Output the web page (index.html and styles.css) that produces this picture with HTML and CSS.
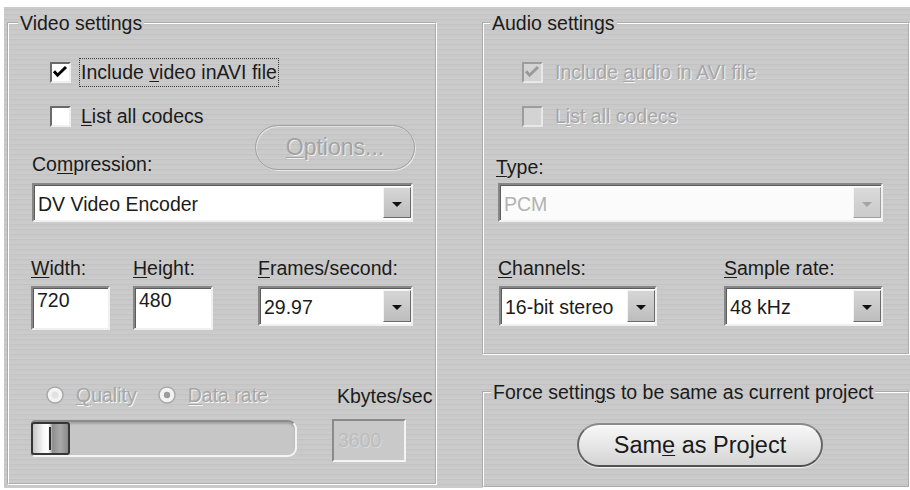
FILE: index.html
```html
<!DOCTYPE html>
<html>
<head>
<meta charset="utf-8">
<link rel="stylesheet" href="styles.css">
</head>
<body>
<div class="window">
  <div class="col-left">
    <fieldset class="group video">
      <legend>Video settings</legend>
      <div class="top-area">
        <div class="check-row row-1">
          <span class="checkbox"><svg width="17" height="17" viewBox="0 0 17 17"><path d="M2 7.2 L5.6 11.2 L14 3" fill="none" stroke="#000" stroke-width="3"/></svg></span>
          <span class="focus-label">Include <u>v</u>ideo inAVI file</span>
        </div>
        <div class="check-row row-2">
          <span class="checkbox"></span>
          <span class="plain-label"><u>L</u>ist all codecs</span>
        </div>
        <div class="field-label comp-label">Co<u>m</u>pression:</div>
        <button class="pill-opt" type="button"><u>O</u>ptions...</button>
      </div>
      <div class="combo comp-combo"><span class="combo-text">DV Video Encoder</span><span class="combo-btn"><span class="tri"></span></span></div>
      <div class="dims video-dims">
        <div class="dim dim-w">
          <div class="field-label"><u>W</u>idth:</div>
          <div class="edit edit-w">720</div>
        </div>
        <div class="dim dim-h">
          <div class="field-label"><u>H</u>eight:</div>
          <div class="edit edit-h">480</div>
        </div>
        <div class="dim dim-f">
          <div class="field-label"><u>F</u>rames/second:</div>
          <div class="combo fps-combo"><span class="combo-text">29.97</span><span class="combo-btn"><span class="tri"></span></span></div>
        </div>
      </div>
      <div class="rate-area">
        <div class="rate-left">
          <div class="radios">
            <span class="radio"><svg width="20" height="20" viewBox="0 0 20 20"><circle cx="10" cy="10" r="8" fill="#f3f3f3" stroke="#a8a8a8" stroke-width="1.5"/><circle cx="10" cy="10" r="3.5" fill="#e2e2e2"/></svg></span>
            <span class="dis-text radio-label q-label"><u>Q</u>uality</span>
            <span class="radio radio-2"><svg width="20" height="20" viewBox="0 0 20 20"><circle cx="10" cy="10" r="8" fill="#f3f3f3" stroke="#a8a8a8" stroke-width="1.5"/><circle cx="10" cy="10" r="3.2" fill="#9c9c9c"/></svg></span>
            <span class="dis-text radio-label"><u>D</u>ata rate</span>
          </div>
          <div class="slider"><div class="thumb"><span class="grip"></span></div></div>
        </div>
        <div class="rate-right">
          <div class="kb-label">Kbytes/sec</div>
          <div class="kb-box">3600</div>
        </div>
      </div>
    </fieldset>
  </div>
  <div class="col-right">
    <fieldset class="group audio">
      <legend>Audio settings</legend>
      <div class="check-row row-1 audio-row">
        <span class="checkbox dis-box"><svg width="17" height="17" viewBox="0 0 17 17"><path d="M2 7.2 L5.6 11.2 L14 3" fill="none" stroke="#9a9a9a" stroke-width="3"/></svg></span>
        <span class="plain-label dis-text">Include <u>a</u>udio in AVI file</span>
      </div>
      <div class="check-row row-2 audio-row">
        <span class="checkbox dis-box"></span>
        <span class="plain-label dis-text">L<u>i</u>st all codecs</span>
      </div>
      <div class="field-label type-label"><u>T</u>ype:</div>
      <div class="combo pcm-combo dis-combo"><span class="combo-text">PCM</span><span class="combo-btn"><span class="tri"></span></span></div>
      <div class="dims audio-dims">
        <div class="dim dim-c">
          <div class="field-label"><u>C</u>hannels:</div>
          <div class="combo chan-combo"><span class="combo-text">16-bit stereo</span><span class="combo-btn"><span class="tri"></span></span></div>
        </div>
        <div class="dim dim-s">
          <div class="field-label"><u>S</u>ample rate:</div>
          <div class="combo rate-combo"><span class="combo-text">48 kHz</span><span class="combo-btn"><span class="tri"></span></span></div>
        </div>
      </div>
    </fieldset>
    <fieldset class="group force">
      <legend>Force settin<u>g</u>s to be same as current project</legend>
      <button class="pill-main" type="button">Sam<u>e</u> as Project</button>
    </fieldset>
  </div>
</div>
</body>
</html>
```

FILE: styles.css
```css
* {
  box-sizing: border-box;
}

html,
body {
  margin: 0;
  padding: 0;
}

body {
  width: 910px;
  height: 490px;
  overflow: hidden;
  background: #ffffff;
  font-family: "Liberation Sans", Arial, sans-serif;
  font-size: 19.5px;
  color: #1b1b1b;
}

u {
  text-decoration: underline;
  text-decoration-thickness: 1px;
  text-underline-offset: 2px;
}

.window {
  margin: 7px 0 0 4px;
  width: 906px;
  height: 481px;
  display: flex;
  background-color: #c8c8c8;
  background-image: repeating-linear-gradient(180deg, #cbcbcb 0, #cbcbcb 2px, #c3c3c3 2px, #c3c3c3 3px, #c9c9c9 3px, #c9c9c9 5px);
}

.col-left {
  width: 437px;
  padding-left: 3px;
  flex: none;
}

.col-right {
  width: 434px;
  margin-left: 35px;
  padding-left: 6px;
  flex: none;
}

/* group boxes */
.group {
  margin: 0;
  padding: 0;
  min-width: 0;
  border: 2px groove #ffffff;
}

.group legend {
  padding: 0 2px;
  height: 22px;
  line-height: 22px;
  white-space: nowrap;
}

.video {
  margin-top: 5px;
  width: 430px;
  height: 473px;
}

.video legend {
  margin-left: 9px;
}

.audio {
  margin-top: 5px;
  width: 428px;
  height: 343px;
}

.audio legend {
  margin-left: 6px;
}

.force {
  margin-top: 26px;
  width: 428px;
  height: 107px;
}

.force legend {
  margin-left: 7px;
}

/* check rows */
.top-area {
  display: grid;
  grid-template-columns: 246px 160px;
}

.check-row {
  display: flex;
  align-items: center;
  height: 29px;
  margin-left: 41px;
}

.row-1 {
  margin-top: 24px;
  grid-column: 1 / -1;
}

.row-2 {
  margin-top: 15px;
  grid-column: 1;
}

.audio-row {
  margin-left: 38px;
}

.checkbox {
  flex: none;
  width: 21px;
  height: 21px;
  border: 2px solid;
  border-color: #6a6a6a #efefef #efefef #6a6a6a;
  background: #ffffff;
  display: flex;
}

.checkbox svg {
  display: block;
}

.dis-box {
  border-color: #9c9c9c #e8e8e8 #e8e8e8 #9c9c9c;
  background: #d3d3d3;
}

.focus-label,
.plain-label {
  margin-left: 8px;
  padding: 0 1px;
  line-height: 27px;
  white-space: nowrap;
}

.focus-label {
  border: 1px dotted #3a3a3a;
}

.plain-label {
  border: 1px solid transparent;
}

.audio-row .plain-label {
  margin-left: 10px;
}

.dis-text {
  color: #a6a6a6;
  text-shadow: 1px 1px 0 #f6f6f6;
}

.field-label {
  line-height: 22px;
  white-space: nowrap;
}

.comp-label {
  grid-column: 1;
  margin-top: 22px;
  margin-left: 23px;
}

.type-label {
  margin-top: 25px;
  margin-left: 12px;
}

/* pill buttons */
.pill-opt {
  grid-column: 2;
  grid-row: 2 / span 2;
  align-self: end;
  margin: 0 0 5px 0;
  width: 160px;
  height: 45px;
  padding: 0;
  border-radius: 23px;
  border: 1.5px solid #a0a0a0;
  background: transparent;
  box-shadow: inset 1px 1px 0 #e2e2e2, 1px 1px 0 #e6e6e6;
  font-family: "Liberation Sans", Arial, sans-serif;
  font-size: 23px;
  color: #a3a3a3;
  text-shadow: 1px 1px 0 #efefef;
}

.pill-main {
  display: block;
  margin: 20px 0 0 93px;
  width: 246px;
  height: 44px;
  padding: 0;
  border-radius: 22px;
  border: 2px solid;
  border-color: #8a8a8a #666666 #505050 #666666;
  background: linear-gradient(180deg, #f7f7f7 0%, #e9e9e9 45%, #d3d3d3 100%);
  box-shadow: inset 0 1px 0 #ffffff, 0 1px 1px rgba(255, 255, 255, 0.8);
  font-family: "Liberation Sans", Arial, sans-serif;
  font-size: 23.5px;
  color: #1a1a1a;
}

/* combos and edits */
.combo {
  display: flex;
  align-items: center;
  background: #ffffff;
  border: 2px solid;
  border-color: #868686 #f0f0f0 #f0f0f0 #868686;
  box-shadow: inset 1px 1px 0 #5c5c5c;
  padding: 2px 0;
}

.combo-text {
  flex: 1;
  padding-left: 4px;
  padding-top: 2px;
  line-height: 22px;
  white-space: nowrap;
}

.combo-btn {
  flex: none;
  width: 28px;
  align-self: stretch;
  border: 1px solid;
  border-color: #f4f4f4 #6a6a6a #6a6a6a #f4f4f4;
  background: linear-gradient(180deg, #d6d6d6, #bdbdbd);
  display: flex;
  align-items: center;
  justify-content: center;
}

.tri {
  width: 0;
  height: 0;
  margin-top: 3px;
  border-left: 5.5px solid transparent;
  border-right: 5.5px solid transparent;
  border-top: 5px solid #111111;
}

.dis-combo {
  background: #fbfbfb;
}

.dis-combo .combo-text {
  color: #b2b2b2;
}

.dis-combo .combo-btn {
  border-color: #f4f4f4 #a0a0a0 #a0a0a0 #f4f4f4;
  background: linear-gradient(180deg, #dadada, #cacaca);
}

.dis-combo .tri {
  border-top-color: #a4a4a4;
}

.comp-combo {
  margin-top: 8px;
  margin-left: 23px;
  width: 381px;
  height: 39px;
}

.pcm-combo {
  margin-top: 5px;
  margin-left: 14px;
  width: 385px;
  height: 39px;
}

.dims {
  display: flex;
  margin-top: 35px;
}

.video-dims {
  margin-left: 22px;
}

.audio-dims {
  margin-left: 14px;
}

.dim {
  flex: none;
}

.dim-w {
  width: 102px;
}

.dim-h {
  width: 125px;
}

.dim-f {
  width: 155px;
}

.dim-c {
  width: 226px;
}

.dim-s {
  width: 159px;
}

.edit {
  margin-top: 7px;
  height: 44px;
  background: #ffffff;
  border: 2px solid;
  border-color: #868686 #f0f0f0 #f0f0f0 #868686;
  box-shadow: inset 1px 1px 0 #5c5c5c;
  padding: 1px 0 0 4px;
  line-height: 22px;
}

.edit-w {
  width: 79px;
}

.edit-h {
  width: 80px;
}

.fps-combo {
  margin-top: 7px;
  width: 155px;
  height: 40px;
}

.chan-combo {
  margin-top: 7px;
  margin-left: 1px;
  width: 158px;
  height: 40px;
}

.rate-combo {
  margin-top: 7px;
  width: 159px;
  height: 40px;
}

/* rate area */
.rate-area {
  display: flex;
  margin-top: 53px;
  margin-left: 22px;
}

.rate-left {
  width: 266px;
  flex: none;
}

.radios {
  display: flex;
  align-items: center;
  height: 24px;
  padding-left: 14px;
}

.radio {
  display: flex;
  width: 20px;
  height: 20px;
}

.radio-2 {
  margin-left: 20px;
}

.radio-label {
  margin-left: 11px;
  line-height: 22px;
  white-space: nowrap;
}

.slider {
  margin-top: 13px;
  height: 37px;
  display: flex;
  border: 2px solid;
  border-color: #8c8c8c #f4f4f4 #f4f4f4 #8c8c8c;
  border-radius: 4px 9px 9px 4px;
  box-shadow: inset 0 2px 2px rgba(0, 0, 0, 0.18);
  background: #c6c6c6;
}

.thumb {
  margin-left: -2px;
  width: 39px;
  height: 33px;
  border: 2px solid #363636;
  border-radius: 3px;
  background: linear-gradient(90deg, #c4c4c4 0%, #f8f8f8 30%, #ffffff 42%, #e4e4e4 48%, #8e8e8e 56%, #a9a9a9 78%, #8a8a8a 100%);
  display: flex;
  align-items: center;
}

.grip {
  margin-left: 16px;
  width: 2px;
  height: 23px;
  background: #2e2e2e;
}

.rate-right {
  margin-left: 35px;
}

.kb-label {
  margin-top: 2px;
  padding-left: 5px;
  line-height: 22px;
  white-space: nowrap;
}

.kb-box {
  margin-top: 12px;
  width: 74px;
  height: 43px;
  border: 2px solid;
  border-color: #8a8a8a #f4f4f4 #f4f4f4 #8a8a8a;
  background: #c9c9c9;
  padding: 8px 0 0 4px;
  line-height: 22px;
  color: #bdbdbd;
  text-shadow: 1px 1px 0 #d8d8d8;
}
```
